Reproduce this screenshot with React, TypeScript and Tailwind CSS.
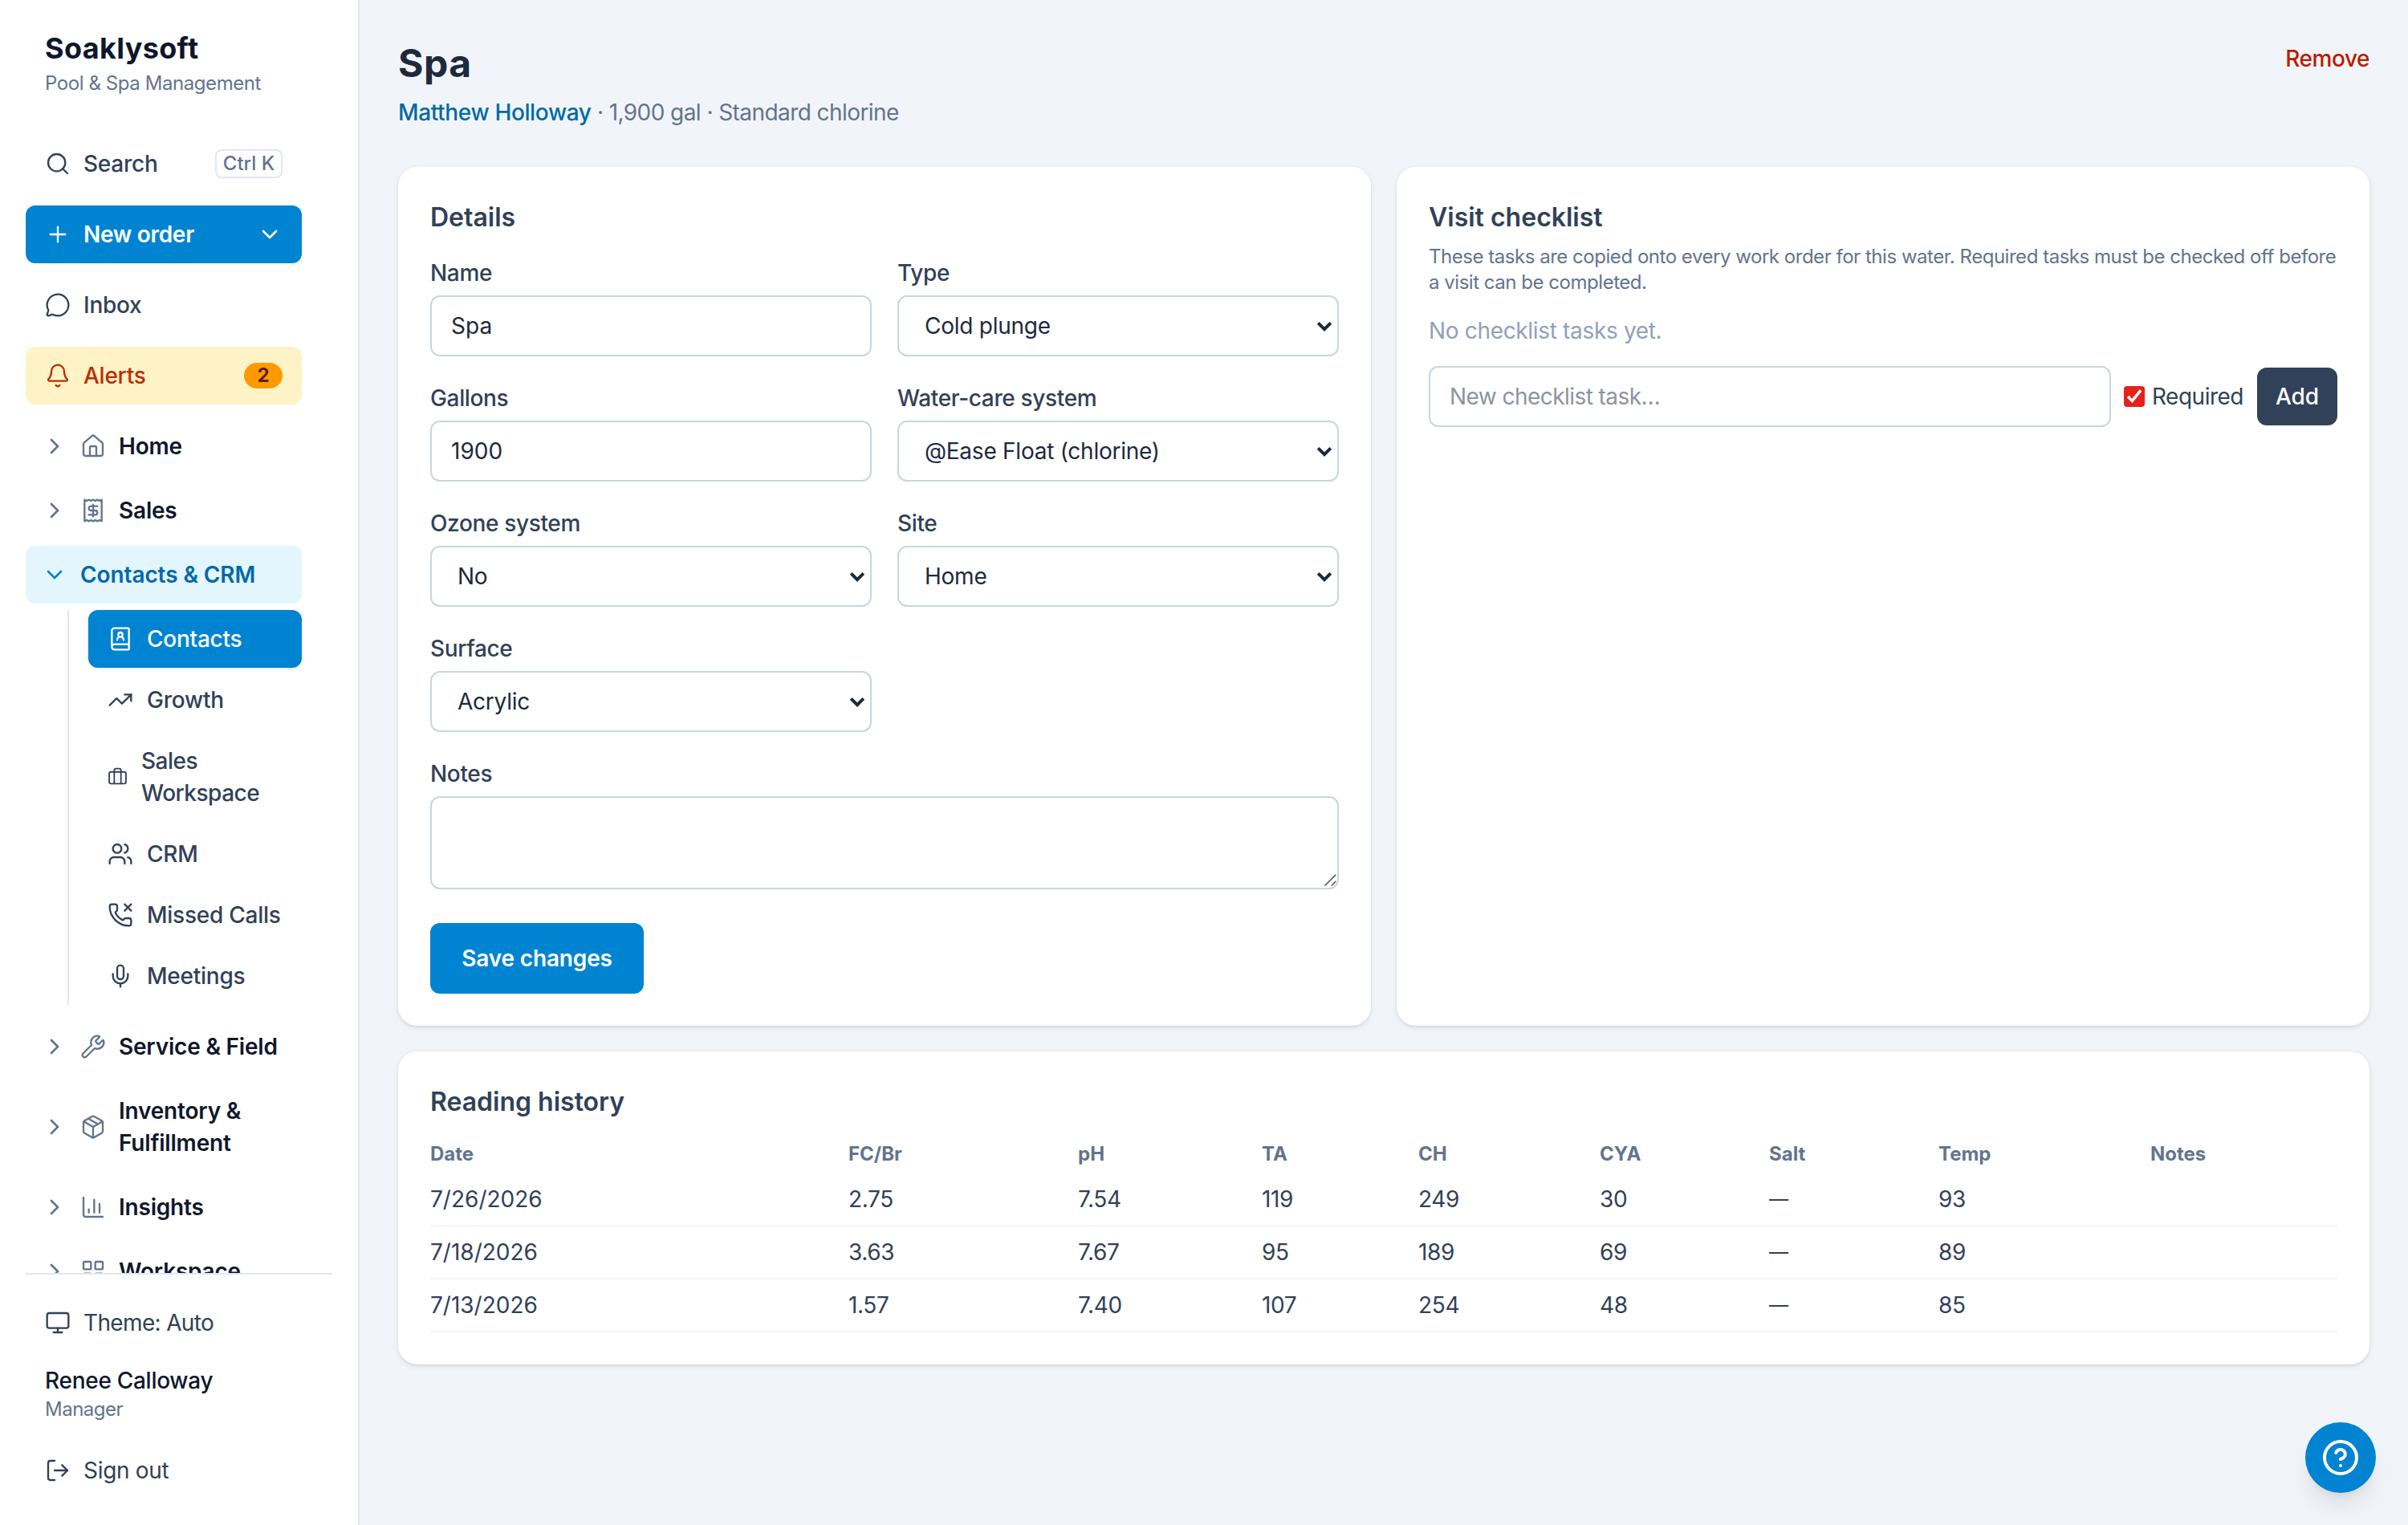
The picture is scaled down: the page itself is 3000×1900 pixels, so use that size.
import type { ReactNode } from "react";
import clsx from "clsx";
import {
  Bell,
  BookUser,
  Briefcase,
  ChartColumn,
  ChevronDown,
  ChevronRight,
  CircleQuestionMark,
  House,
  LayoutGrid,
  LogOut,
  MessageCircle,
  Mic,
  Monitor,
  Package,
  PhoneMissed,
  Plus,
  Receipt,
  Search,
  TrendingUp,
  Users,
  Wrench,
  type LucideIcon,
} from "lucide-react";

interface SubItem {
  label: string;
  icon: LucideIcon;
  active?: boolean;
  narrow?: boolean;
}

const CRM_ITEMS: SubItem[] = [
  { label: "Contacts", icon: BookUser, active: true },
  { label: "Growth", icon: TrendingUp },
  { label: "Sales Workspace", icon: Briefcase, narrow: true },
  { label: "CRM", icon: Users },
  { label: "Missed Calls", icon: PhoneMissed },
  { label: "Meetings", icon: Mic },
];

const COLUMNS = [
  { label: "Date", width: "w-[520px]" },
  { label: "FC/Br", width: "w-[286px]" },
  { label: "pH", width: "w-[229px]" },
  { label: "TA", width: "w-[195px]" },
  { label: "CH", width: "w-[226px]" },
  { label: "CYA", width: "w-[211px]" },
  { label: "Salt", width: "w-[211px]" },
  { label: "Temp", width: "w-[264px]" },
  { label: "Notes", width: "w-[234px]" },
];

const READINGS = [
  ["7/26/2026", "2.75", "7.54", "119", "249", "30", "—", "93", ""],
  ["7/18/2026", "3.63", "7.67", "95", "189", "69", "—", "89", ""],
  ["7/13/2026", "1.57", "7.40", "107", "254", "48", "—", "85", ""],
];

function NavGroup({ label, icon: Icon }: { label: string; icon: LucideIcon }) {
  return (
    <div className="flex shrink-0 items-center gap-4 rounded-xl py-4 pl-5 font-semibold tracking-[-0.2px] text-slate-900">
      <ChevronRight className="size-8 shrink-0 text-slate-500" />
      <Icon className="size-8 shrink-0 text-slate-500" strokeWidth={1.75} />
      <span className="w-[208px]">{label}</span>
    </div>
  );
}

function Sidebar() {
  return (
    <aside className="flex h-full w-[448px] shrink-0 flex-col border-r-2 border-slate-200 bg-white p-8">
      <div className="px-6">
        <p className="text-[36px] leading-[56px] font-bold tracking-[0.35px] text-slate-900">Soaklysoft</p>
        <p className="text-[24px] leading-8 tracking-[-0.42px] text-slate-500">Pool &amp; Spa Management</p>
      </div>

      <nav className="mt-12 flex min-h-0 w-[344px] flex-1 flex-col overflow-hidden font-medium tracking-[-0.25px]">
        <div className="flex shrink-0 flex-col gap-4">
          <div className="flex h-[72px] items-center gap-4 px-6 text-slate-700">
            <Search className="size-8" strokeWidth={1.75} />
            <span className="flex-1">Search</span>
            <kbd className="flex h-9 w-[84px] items-center justify-center rounded-lg border-2 border-slate-200 font-[inherit] text-[24px] tracking-normal text-slate-500">
              Ctrl K
            </kbd>
          </div>
          <button className="flex h-[72px] items-center gap-4 rounded-xl bg-sky-600 px-6 text-left font-semibold tracking-[-0.3px] text-white">
            <Plus className="size-8" strokeWidth={1.75} />
            <span className="flex-1">New order</span>
            <ChevronDown className="size-8" />
          </button>
          <div className="flex h-[72px] items-center gap-4 px-6 text-slate-700">
            <MessageCircle className="size-8" strokeWidth={1.75} />
            <span>Inbox</span>
          </div>
          <div className="flex h-[72px] items-center gap-4 rounded-xl bg-amber-100 px-6 text-[#bb2d00]">
            <Bell className="size-8" strokeWidth={1.75} />
            <span className="flex-1">Alerts</span>
            <span className="flex h-8 w-12 items-center justify-center rounded-full bg-amber-500 text-[24px] font-bold text-[#5c1f26]">
              2
            </span>
          </div>
        </div>

        <div className="mt-4 flex shrink-0 flex-col gap-2">
          <NavGroup label="Home" icon={House} />
          <NavGroup label="Sales" icon={Receipt} />
          <div>
            <div className="flex h-[72px] items-center gap-4 rounded-xl bg-[#e3f6fe] pl-5 font-semibold tracking-[-0.1px] text-sky-700">
              <ChevronDown className="size-8 text-sky-600" />
              <span>Contacts &amp; CRM</span>
            </div>
            <div className="mt-2 mb-2 ml-[52px] flex flex-col gap-1 border-l-2 border-slate-200 pl-6">
              {CRM_ITEMS.map(({ label, icon: Icon, active, narrow }) => (
                <div
                  key={label}
                  className={clsx(
                    "flex items-center gap-4 rounded-xl py-4 pl-6",
                    active
                      ? "bg-sky-600 text-white shadow-[0_2px_4px_rgba(0,0,0,0.08)]"
                      : "text-slate-700",
                  )}
                >
                  <Icon className={clsx("h-8 shrink-0", narrow ? "w-[25px]" : "w-8")} strokeWidth={1.75} />
                  <span className={clsx("pl-px", narrow && "w-[160px] tracking-[-0.5px]")}>{label}</span>
                </div>
              ))}
            </div>
          </div>
          <NavGroup label="Service & Field" icon={Wrench} />
          <NavGroup label="Inventory & Fulfillment" icon={Package} />
          <NavGroup label="Insights" icon={ChartColumn} />
          <NavGroup label="Workspace" icon={LayoutGrid} />
        </div>
      </nav>

      <div className="shrink-0 border-t-2 border-slate-200 pt-6 text-slate-700">
        <div className="flex h-[72px] items-center gap-4 px-6">
          <Monitor className="size-8" strokeWidth={1.75} />
          <span className="tracking-[-0.65px]">Theme: Auto</span>
        </div>
        <div className="px-6 pt-4 pb-6">
          <p className="font-medium tracking-[-0.28px] text-slate-900">Renee Calloway</p>
          <p className="text-[24px] leading-8 tracking-[-0.5px] text-slate-500">Manager</p>
        </div>
        <div className="flex h-[72px] items-center gap-4 px-6">
          <LogOut className="size-8" strokeWidth={1.75} />
          <span className="tracking-[-0.3px]">Sign out</span>
        </div>
      </div>
    </aside>
  );
}

function Card({ title, children, className }: { title: string; children: ReactNode; className?: string }) {
  return (
    <section
      className={clsx(
        "rounded-3xl bg-white p-10 shadow-[0_2px_6px_rgba(0,0,0,0.1),0_2px_4px_-2px_rgba(0,0,0,0.1)]",
        className,
      )}
    >
      <h2 className="pb-[2px] text-[32px] leading-[46px] font-semibold text-slate-700">{title}</h2>
      {children}
    </section>
  );
}

function Field({ label, children }: { label: string; children: ReactNode }) {
  return (
    <label className="block font-medium tracking-[-0.35px] text-slate-700">
      {label}
      <div className="relative mt-2 font-normal">{children}</div>
    </label>
  );
}

function TextInput({ value }: { value: string }) {
  return (
    <input
      defaultValue={value}
      className="block h-[76px] w-full rounded-xl border-2 border-slate-300 px-6 tracking-normal text-slate-800"
    />
  );
}

function Select({ value }: { value: string }) {
  return (
    <>
      <select className="block h-[76px] w-full appearance-none rounded-xl border-2 border-slate-300 px-8 tracking-[-0.25px] text-slate-800">
        <option>{value}</option>
      </select>
      <svg
        viewBox="0 0 20 14"
        className="pointer-events-none absolute top-8 right-2 h-[14px] w-5 text-slate-800"
        fill="none"
        stroke="currentColor"
        strokeWidth="4"
      >
        <path d="M2.2 2.4 10 10.2l7.8-7.8" />
      </svg>
    </>
  );
}

function DetailsCard() {
  return (
    <Card title="Details">
      <div className="mt-6 grid grid-cols-2 gap-8">
        <Field label="Name">
          <TextInput value="Spa" />
        </Field>
        <Field label="Type">
          <Select value="Cold plunge" />
        </Field>
        <Field label="Gallons">
          <TextInput value="1900" />
        </Field>
        <Field label="Water-care system">
          <Select value="@Ease Float (chlorine)" />
        </Field>
        <Field label="Ozone system">
          <Select value="No" />
        </Field>
        <Field label="Site">
          <Select value="Home" />
        </Field>
        <Field label="Surface">
          <Select value="Acrylic" />
        </Field>
        <div className="col-span-2">
          <Field label="Notes">
            <textarea className="block h-[116px] w-full resize-none rounded-xl border-2 border-slate-300" />
            {/* resize grip */}
            <svg
              viewBox="0 0 16 16"
              className="pointer-events-none absolute right-[3px] bottom-[3px] size-4 text-slate-600"
              fill="none"
              stroke="currentColor"
              strokeWidth="1.6"
            >
              <path d="M1.5 14.5 15.3.7M9.8 14.5l5.5-5.5" />
            </svg>
          </Field>
        </div>
      </div>
      <button className="mt-[42px] h-[88px] w-[266px] rounded-xl bg-sky-600 font-semibold tracking-[-0.15px] text-white">
        Save changes
      </button>
    </Card>
  );
}

function ChecklistCard() {
  return (
    <Card title="Visit checklist">
      <p className="mt-2 text-[24px] leading-8 tracking-[-0.47px] text-slate-500">
        These tasks are copied onto every work order for this water. Required tasks must be checked off before a
        visit can be completed.
      </p>
      <p className="mt-6 tracking-[-0.33px] text-slate-400">No checklist tasks yet.</p>
      <div className="mt-6 flex items-center gap-4">
        <input
          placeholder="New checklist task…"
          className="h-[76px] w-[850px] rounded-xl border-2 border-slate-300 px-6 tracking-[-0.55px] placeholder:text-[#8e949e]"
        />
        <label className="flex w-[150px] items-center gap-[9px] tracking-[-0.5px] text-slate-700">
          <span className="flex size-[26px] shrink-0 items-center justify-center rounded-[4px] bg-[#e5231b] text-white">
            <svg viewBox="0 0 26 26" className="size-[26px]" fill="none" stroke="currentColor" strokeWidth="3.6">
              <path d="M5 13l5.4 5.4L21 5.4" />
            </svg>
          </span>
          Required
        </label>
        <button className="h-[72px] w-[100px] rounded-xl bg-slate-700 font-medium text-white">Add</button>
      </div>
    </Card>
  );
}

function ReadingHistory() {
  return (
    <Card title="Reading history" className="mt-8">
      <table className="mt-6 w-full table-fixed border-separate border-spacing-0 text-left">
        <thead>
          <tr className="text-[24px] leading-8 text-slate-500">
            {COLUMNS.map((col) => (
              <th key={col.label} className={clsx("p-0 pb-2 pl-px font-bold first:pl-0", col.width)}>
                {col.label}
              </th>
            ))}
          </tr>
        </thead>
        <tbody className="text-slate-700">
          {READINGS.map((row) => (
            <tr key={row[0]}>
              {row.map((cell, i) => (
                <td
                  key={i}
                  className={clsx(
                    "h-[66px] border-b-2 border-slate-100 p-0 pl-px first:pl-0",
                    cell === "—" && "text-[24px]",
                    i > 0 && "tracking-[-0.35px]",
                  )}
                >
                  {cell}
                </td>
              ))}
            </tr>
          ))}
        </tbody>
      </table>
    </Card>
  );
}

export default function App() {
  return (
    <div className="relative flex h-[1900px] w-[3000px] overflow-hidden bg-slate-100 font-['Inter',sans-serif] text-[28px] leading-10 text-slate-800">
      <Sidebar />
      <main className="min-w-0 flex-1 p-12">
        <div className="flex items-start justify-between">
          <div>
            <h1 className="pb-[2px] text-[48px] leading-[62px] font-bold tracking-[0.5px] text-slate-800">Spa</h1>
            <p className="mt-2 tracking-[-0.57px] text-slate-500">
              <a className="font-medium tracking-[-0.36px] text-sky-700">Matthew Holloway</a> · 1,900 gal · Standard
              chlorine
            </p>
          </div>
          <button className="mt-[5px] font-medium tracking-[-0.45px] text-[#bb1b00]">Remove</button>
        </div>

        <div className="mt-12 grid grid-cols-2 gap-8">
          <DetailsCard />
          <ChecklistCard />
        </div>
        <ReadingHistory />
      </main>

      <button className="absolute right-10 bottom-10 flex size-[88px] items-center justify-center rounded-full bg-sky-600 text-white shadow-[0_20px_30px_-6px_rgba(0,0,0,0.1),0_8px_12px_-8px_rgba(0,0,0,0.1)]">
        <CircleQuestionMark className="size-12" />
      </button>
    </div>
  );
}
